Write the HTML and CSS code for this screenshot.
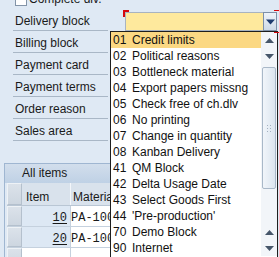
FILE: index.html
```html
<!DOCTYPE html>
<html>
<head>
<meta charset="utf-8">
<link rel="stylesheet" href="styles.css">
</head>
<body>
  <div class="form">
    <div class="check-row"><span class="checkbox"></span><span class="check-label">Complete div.</span></div>
    <div class="field-row">
      <div class="label">Delivery block</div>
      <div class="combo">
        <div class="combo-input"></div>
        <div class="combo-btn">
          <svg width="9" height="6" viewBox="0 0 9 6"><path d="M0 0.5H9L4.5 5.5Z" fill="#1d3a6e"/></svg>
        </div>
        <span class="focus tl-h"></span><span class="focus tl-v"></span>
        <span class="focus tr-h"></span><span class="focus br-h"></span>
      </div>
    </div>
    <div class="field-row"><div class="label">Billing block</div></div>
    <div class="field-row"><div class="label">Payment card</div></div>
    <div class="field-row"><div class="label">Payment terms</div></div>
    <div class="field-row"><div class="label">Order reason</div></div>
    <div class="field-row"><div class="label">Sales area</div></div>
  </div>

  <div class="table-panel">
    <div class="tab">All items</div>
    <div class="grid">
      <div class="grow head">
        <div class="sel"></div>
        <div class="cell item">Item</div>
        <div class="cell mat">Material</div>
      </div>
      <div class="grow">
        <div class="sel"></div>
        <div class="cell item num"><span class="link">10</span></div>
        <div class="cell mat mono">PA-1000</div>
      </div>
      <div class="grow">
        <div class="sel"></div>
        <div class="cell item num"><span class="link">20</span></div>
        <div class="cell mat mono">PA-1000</div>
      </div>
      <div class="grow">
        <div class="sel"></div>
        <div class="cell item empty"></div>
        <div class="cell mat"></div>
      </div>
    </div>
  </div>

  <div class="dropdown">
    <ul class="list">
      <li class="active"><span class="code">01</span><span>Credit limits</span></li>
      <li><span class="code">02</span><span>Political reasons</span></li>
      <li><span class="code">03</span><span>Bottleneck material</span></li>
      <li><span class="code">04</span><span>Export papers missng</span></li>
      <li><span class="code">05</span><span>Check free of ch.dlv</span></li>
      <li><span class="code">06</span><span>No printing</span></li>
      <li><span class="code">07</span><span>Change in quantity</span></li>
      <li><span class="code">08</span><span>Kanban Delivery</span></li>
      <li><span class="code">41</span><span>QM Block</span></li>
      <li><span class="code">42</span><span>Delta Usage Date</span></li>
      <li><span class="code">43</span><span>Select Goods First</span></li>
      <li><span class="code">44</span><span>'Pre-production'</span></li>
      <li><span class="code">70</span><span>Demo Block</span></li>
      <li><span class="code">90</span><span>Internet</span></li>
    </ul>
    <div class="scrollbar">
      <div class="sb-btn"><svg width="9" height="5" viewBox="0 0 9 5"><path d="M0 5H9L4.5 0Z" fill="#46566a"/></svg></div>
      <div class="sb-btn"><svg width="9" height="5" viewBox="0 0 9 5"><path d="M0 0H9L4.5 5Z" fill="#46566a"/></svg></div>
      <div class="sb-track">
        <div class="sb-thumb">
          <svg width="5" height="7" viewBox="0 0 5 7"><g fill="#a3b1c0"><rect x="0" y="0" width="1" height="1"/><rect x="3" y="0" width="1" height="1"/><rect x="0" y="3" width="1" height="1"/><rect x="3" y="3" width="1" height="1"/><rect x="0" y="6" width="1" height="1"/><rect x="3" y="6" width="1" height="1"/></g></svg>
        </div>
      </div>
      <div class="sb-btn"><svg width="9" height="5" viewBox="0 0 9 5"><path d="M0 5H9L4.5 0Z" fill="#46566a"/></svg></div>
      <div class="sb-btn"><svg width="9" height="5" viewBox="0 0 9 5"><path d="M0 0H9L4.5 5Z" fill="#46566a"/></svg></div>
    </div>
  </div>
</body>
</html>
```

FILE: styles.css
```css
* { box-sizing: border-box; margin: 0; padding: 0; }

html, body { height: 100%; }

body {
  background: #dfe9f4;
  font-family: "Liberation Sans", Arial, sans-serif;
  font-size: 12px;
  color: #1a1a1a;
  position: relative;
  display: flow-root;
  overflow: hidden;
}

/* ---------- form ---------- */
.form {
  margin-top: -13px;
  padding-left: 13px;
}

.check-row {
  height: 22px;
  display: flex;
  align-items: flex-start;
  padding-left: 2px;
}

.checkbox {
  width: 12px;
  height: 12px;
  margin-top: 7px;
  background: #fff;
  border: 1px solid #8394a8;
}

.check-label {
  margin-top: 6px;
  margin-left: 2px;
  line-height: 12px;
}

.field-row {
  display: flex;
  height: 22px;
}

.label {
  width: 95px;
  height: 22px;
  border-bottom: 1px solid #a9b7c6;
  padding: 4px 0 0 2px;
  line-height: 17px;
  white-space: nowrap;
}

.combo {
  position: relative;
  margin-left: 17px;
  margin-top: 3px;
  width: 152px;
  height: 19px;
  display: flex;
}

.combo-input {
  flex: 1;
  background: #fee99d;
  border: 1px solid #a8b3c0;
  border-right: none;
}

.combo-btn {
  width: 14px;
  display: flex;
  align-items: center;
  justify-content: center;
  background: linear-gradient(#eef3f9, #cdd9e7);
  border: 1px solid #7d90a8;
}

.focus {
  position: absolute;
  background: #d6070b;
  z-index: 10;
}
.tl-h { left: -2px; top: -2px; width: 6px; height: 2px; }
.tl-v { left: -2px; top: -2px; width: 2px; height: 7px; }
.tr-h { right: -3px; top: -2px; width: 6px; height: 1px; }
.br-h { right: -3px; bottom: -2px; width: 6px; height: 1px; }

/* ---------- table ---------- */
.table-panel {
  margin-top: 22px;
  margin-left: 4px;
  width: 106px;
  overflow: hidden;
}

.tab {
  height: 20px;
  border-top: 1px solid #9fb6d1;
  border-left: 1px solid #9fb6d1;
  background: linear-gradient(#d2deec, #bfd1e5);
  padding-left: 17px;
  line-height: 19px;
  color: #1a1a1a;
}

.grid {
  border-left: 1px solid #9fb6d1;
  padding-left: 2px;
}

.grow {
  display: flex;
  height: 21px;
  border-bottom: 1px solid #c5d1de;
}

.grow.head {
  height: 23px;
  background: #d9e2ec;
  border-bottom: 1px solid #b9c6d4;
}

.sel {
  width: 15px;
  flex: none;
  background: linear-gradient(#dbe2ea, #cdd6e0);
  border: 1px solid #eef2f6;
  border-right-color: #b4c0cd;
  border-bottom-color: #b4c0cd;
}

.cell {
  white-space: nowrap;
  overflow: hidden;
}

.cell.item {
  width: 49px;
  flex: none;
  border-right: 1px solid #c5d1de;
  background: #dde8f4;
}

.cell.mat {
  flex: 1;
  min-width: 0;
  background: #fff;
}

.head .cell {
  background: transparent;
  border-right: 1px solid #f3f6fa;
  padding-top: 6px;
  line-height: 16px;
}
.head .cell.item { padding-left: 4px; }
.head .cell.mat { padding-left: 2px; border-right: none; }

.num {
  text-align: right;
  padding-right: 3px;
}

.mono, .num {
  font-family: "Liberation Mono", "Courier New", monospace;
  font-size: 12px;
  padding-top: 3px;
  line-height: 18px;
}

.cell.mat.mono { padding-left: 0; }

.link {
  text-decoration: underline;
  text-underline-offset: 2px;
}

.cell.item.empty { background: #fff; }

/* ---------- dropdown overlay ---------- */
.dropdown {
  position: absolute;
  left: 110px;
  top: 31px;
  width: 168px;
  height: 240px;
  background: #fff;
  border: 1px solid #1e1e1e;
  display: flex;
  align-items: flex-start;
  z-index: 5;
}

.list {
  list-style: none;
  width: 150px;
  flex: none;
}

.list li {
  height: 16px;
  line-height: 16px;
  padding-left: 2px;
  white-space: nowrap;
  display: flex;
  color: #111;
}

.list li.active { background: #fbd883; }

.code { width: 19px; flex: none; }

.scrollbar {
  width: 16px;
  height: 224px;
  flex: none;
  display: flex;
  flex-direction: column;
  background: #f2f5f9;
}

.sb-btn {
  height: 16px;
  flex: none;
  display: flex;
  align-items: center;
  justify-content: center;
}

.sb-track {
  flex: 1;
  padding: 3px 1px 0 1px;
}

.sb-thumb {
  height: 122px;
  border: 1px solid #a9b8c8;
  border-radius: 2px;
  background: linear-gradient(90deg, #f1f5fa, #dbe5ef);
  display: flex;
  align-items: center;
  justify-content: center;
}
```
